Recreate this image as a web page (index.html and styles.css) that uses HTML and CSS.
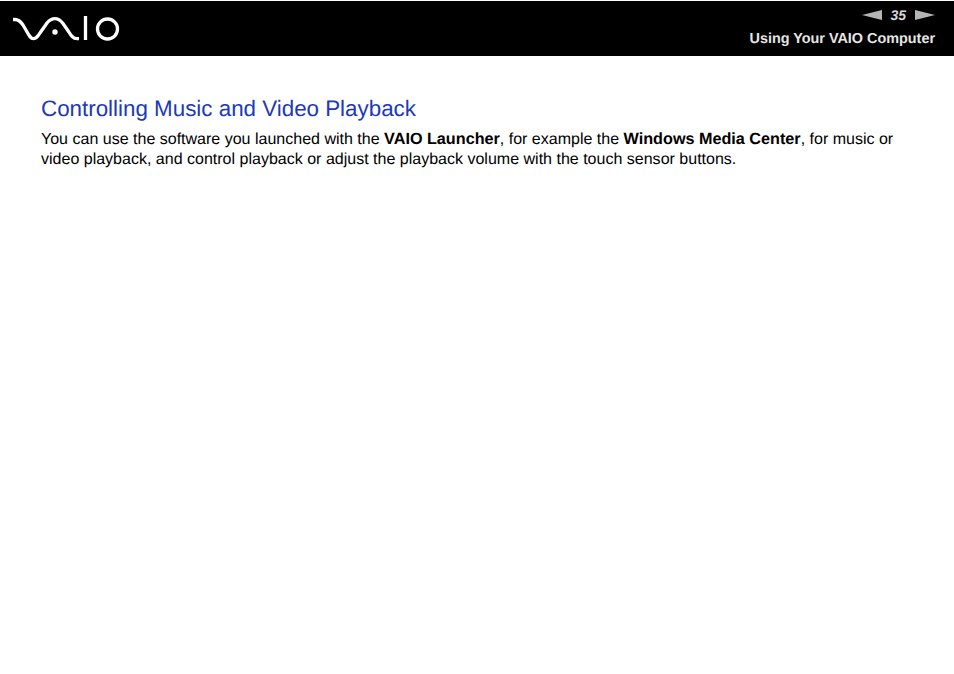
FILE: index.html
```html
<!DOCTYPE html>
<html lang="en">
<head>
<meta charset="utf-8">
<title>Controlling Music and Video Playback</title>
<link rel="stylesheet" href="styles.css">
</head>
<body>
<header class="topbar">
  <svg class="logo" width="108" height="28" viewBox="0 0 108 28" fill="none" stroke="#fff" stroke-width="3.3">
    <path d="M1 4.5 H3 C7 4.5 9 7 11 10 L14.5 16 C17 20.5 18.5 23.7 21.5 23.7 C24.5 23.7 26 21 29 16.5 L35 8 C37.5 5 40 3.7 43 3.7 C46 3.7 48.5 5.5 51 8.5 L56.5 16.5 C59 20.5 61 23.7 65 23.7 H67"/>
    <circle cx="43" cy="17" r="2.7" fill="#fff" stroke="none"/>
    <path d="M73.5 1 V25"/>
    <circle cx="95.5" cy="14" r="10"/>
  </svg>
  <div class="nav">
    <div class="pager">
      <svg class="arrow" width="20" height="10" viewBox="0 0 20 10"><polygon points="0,5 20,0 20,10"/></svg>
      <span class="page">35</span>
      <svg class="arrow" width="20" height="10" viewBox="0 0 20 10"><polygon points="20,5 0,0 0,10"/></svg>
    </div>
    <div class="section">Using Your VAIO Computer</div>
  </div>
</header>
<main class="content">
  <h1 class="title">Controlling Music and Video Playback</h1>
  <p class="body">You can use the software you launched with the <b class="strong">VAIO Launcher</b>, for example the <b class="strong">Windows Media Center</b>, for music or video playback, and control playback or adjust the playback volume with the touch sensor buttons.</p>
</main>
</body>
</html>
```
FILE: styles.css
```css
* { box-sizing: border-box; }
html, body { margin: 0; padding: 0; background: #fff; }
body { font-family: "Liberation Sans", Arial, sans-serif; color: #000; height: 674px; overflow: hidden; text-rendering: geometricPrecision; }
.topbar {
  height: 55px;
  margin-top: 1px;
  background: #000;
  display: flex;
  justify-content: space-between;
  align-items: flex-start;
  padding: 0 19px 0 12px;
}
.logo { margin-top: 14px; flex: none; }
.nav { display: flex; flex-direction: column; align-items: flex-end; }
.pager { display: flex; align-items: center; gap: 8px; margin-top: 5px; height: 18px; }
.arrow { fill: #b5b5b5; display: block; }
.page { color: #d8d8d8; font-size: 14px; font-style: italic; font-weight: 700; margin-right: 1px; }
.section { color: #e6e6e6; font-size: 14.4px; font-weight: 700; margin-top: 7px; line-height: 16px; }
.content { padding: 0 41px; }
.title { color: #2039b8; font-size: 22.36px; font-weight: 400; line-height: 26px; margin: 40px 0 0; }
.body { font-size: 16.03px; line-height: 20px; margin: 7px 0 0; width: 872px; }
.strong { font-size: 16.2px; }
```
